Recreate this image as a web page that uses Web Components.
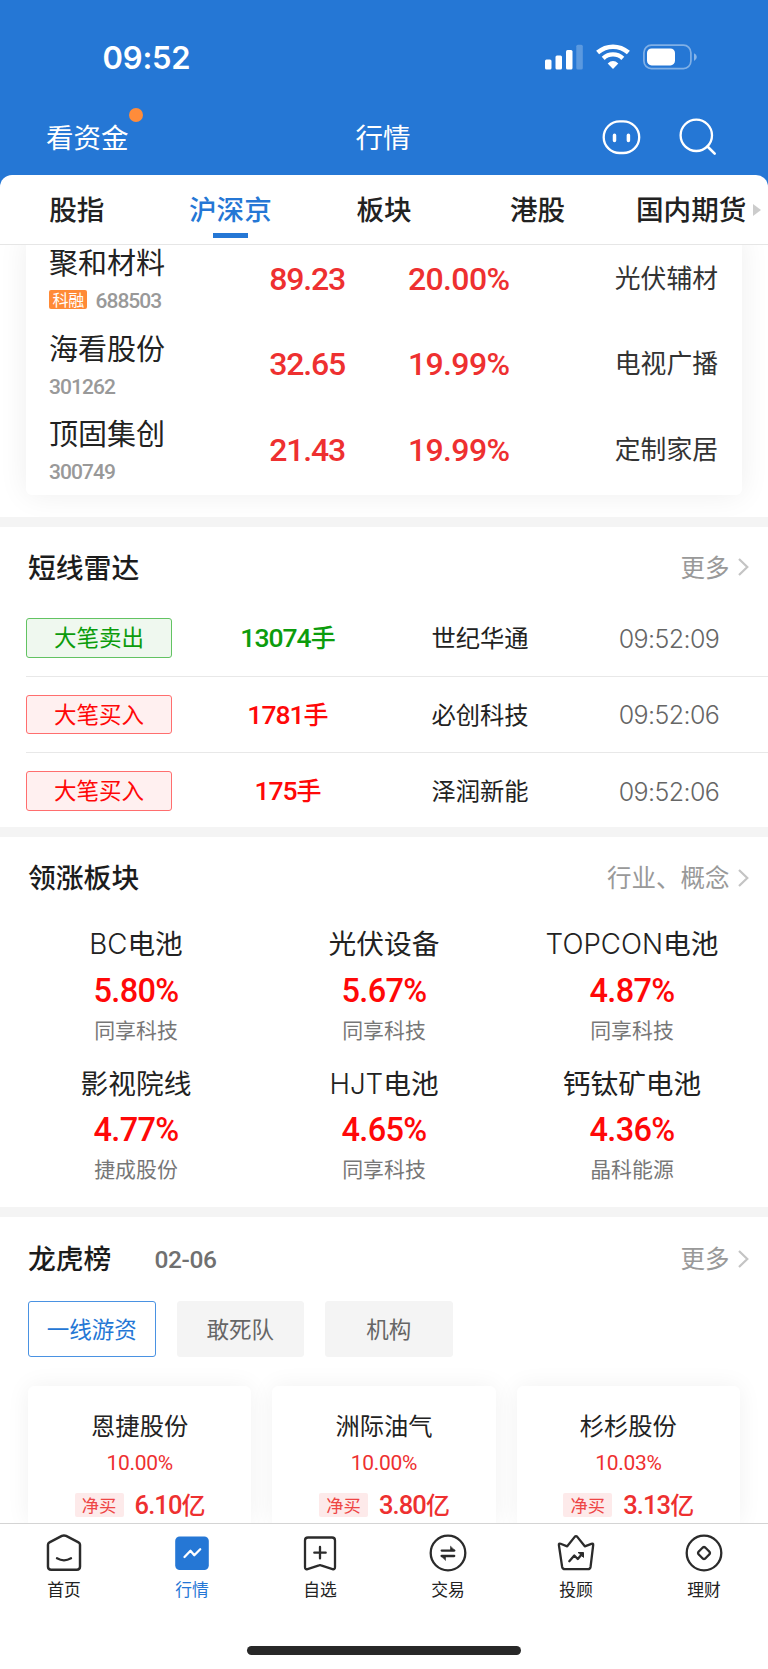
<!DOCTYPE html>
<html lang="zh-CN">
<head>
<meta charset="utf-8">
<title>行情</title>
<style>
  html, body { margin: 0; padding: 0; background: #fff; }
  body {
    --blue: #2577d5;
    --num: Roboto, "Noto Sans CJK SC", sans-serif;
    font-family: "Noto Sans CJK SC", sans-serif;
    color: #222;
  }
</style>
</head>
<body>
<market-page></market-page>

<script>
const ICONS = {
  home: '<path d="M4 12.2Q4 10.6 5.4 9.9L17 3.9Q19 2.9 21 3.9L32.600 9.900Q34 10.600 34 12.200V32.500Q34 35.500 31 35.500H7Q4 35.500 4 32.500Z" transform="translate(-1.3 -2.2) scale(1.068)"/><path d="M12 24.300Q19 28.300 26 24.300"/>',
  market: '<rect x="2.200" y="2.500" width="33.600" height="33.600" rx="4.500" fill="#2577d5" stroke="none"/><path d="M11.500 23L17.500 16.800L21.300 21.200L27.200 15.300" stroke="#fff"/>',
  fav: '<path d="M7 3.500H31Q34 3.500 34 6.500V33Q34 35.800 31.500 35.100L20 31.400Q19 31 18 31.400L6.500 35.100Q4 35.800 4 33V6.500Q4 3.500 7 3.500Z"/><path d="M19 13V24.400M13.300 18.700H24.700"/>',
  trade: '<circle cx="19" cy="19" r="17.300"/><path d="M12.700 16.600H25.200M25.200 22H12.700"/><path d="M25.800 16.600H21.500V12.500Z M12.200 22H16.500V26.100Z" fill="#2b2b2b" stroke-width=".6"/>',
  advisor: '<path d="M1.900 11Q1.600 9 3.600 9.800L10.200 12.300L17.700 2.900Q19 1.500 20.300 2.900L27.800 12.300L34.400 9.800Q36.500 9 36.200 11L33.600 32.700Q33.200 35.200 30.800 35.200H8Q5.600 35.200 5.100 32.700Z"/><path d="M12.300 27.200L17.300 21.500L20.800 25L25 20"/><path d="M21.500 18.500H26.500V23Z" fill="#2b2b2b" stroke-width="1"/>',
  wealth: '<circle cx="19" cy="19" r="17.300"/><path d="M17 14.300Q19 11.700 21 14.300L23.700 17Q26.300 19 23.700 21L21 23.700Q19 26.300 17 23.700L14.300 21Q11.700 19 14.300 17Z"/>'
};

// shared base: attaches the shadow root and fills it once connected
class BaseElement extends HTMLElement {
  constructor() {
    super();
    this.attachShadow({ mode: 'open' });
  }
  connectedCallback() {
    this.shadowRoot.innerHTML = this.template();
  }
  attr(name) {
    return this.getAttribute(name) || '';
  }
}

class StatusBar extends BaseElement {
  template() {
    return `
      <style>
        :host { display: flex; justify-content: space-between; align-items: center; height: 115px;
          padding: 0 71px 0 102.500px; color: #fff; box-sizing: border-box; }
        .time { font: 600 31px/40px Inter, sans-serif; letter-spacing: -0.200px; }
        .icons { display: flex; align-items: center; gap: 13px; margin-top: -2px; }
        svg { display: block; }
      </style>
      <span class="time">09:52</span>
      <div class="icons">
        <svg width="38" height="26" fill="#fff">
          <rect x="0" y="15.500" width="6.500" height="10" rx="1.500"/>
          <rect x="10.500" y="11.500" width="6.500" height="14" rx="1.500"/>
          <rect x="21" y="6" width="6.500" height="19.500" rx="1.500"/>
          <rect x="31.300" y="0.700" width="6.500" height="24.800" rx="1.500" opacity=".25"/>
        </svg>
        <svg width="34" height="26" viewBox="0 0 34 26" fill="none" stroke="#fff">
          <path d="M1.600 8.600Q8.500 2.700 17 2.700T32.400 8.600" stroke-width="4.600"/>
          <path d="M7.200 14.300Q11.500 10.400 17 10.400T26.800 14.300" stroke-width="4.400"/>
          <path d="M17 25L11.700 19.400Q17 14.500 22.300 19.400Z" fill="#fff" stroke="none"/>
        </svg>
        <svg width="54" height="26" viewBox="0 0 54 26">
          <rect x="0.900" y="1.200" width="47" height="23.400" rx="7.500" fill="none" stroke="#fff" stroke-opacity=".42" stroke-width="1.700"/>
          <rect x="4" y="4.400" width="28" height="17" rx="4.600" fill="#fff"/>
          <path d="M51 9.200Q53.800 10.500 53.800 13T51 16.900Z" fill="#fff" opacity=".45"/>
        </svg>
      </div>`;
  }
}

class TitleBar extends BaseElement {
  template() {
    return `
      <style>
        :host { display: grid; grid-template-columns: 1fr auto 1fr; align-items: center; height: 60px;
          margin-top: -9px; padding: 0 51px 0 46px; color: #fff; font-size: 27.500px; line-height: 40px; }
        .left { position: relative; justify-self: start; }
        .dot { position: absolute; left: 83px; top: -8px; width: 14px; height: 14px; border-radius: 50%; background: #ff8c3a; }
        .mid { padding-left: 3px; }
        .tools { display: flex; justify-content: flex-end; gap: 38px; margin-top: 1px; }
        svg { display: block; fill: none; stroke: #fff; stroke-width: 2.300; stroke-linecap: round; }
      </style>
      <span class="left">看资金<i class="dot"></i></span>
      <span class="mid">行情</span>
      <div class="tools">
        <svg width="39" height="38" viewBox="0 0 39 38">
          <rect x="1.700" y="3.400" width="35.500" height="31.600" rx="16"/>
          <path d="M12.500 17.300V22.500M26.400 17.300V22.500" stroke-width="3.500"/>
        </svg>
        <svg width="38" height="38" viewBox="0 0 38 38">
          <circle cx="17.300" cy="17.300" r="15.700"/><path d="M28.500 28.500L35.700 35.700" stroke-width="2.600"/>
        </svg>
      </div>`;
  }
}

class MarketTabs extends BaseElement {
  template() {
    const tabs = ['股指', '沪深京', '板块', '港股', '国内期货'];
    return `
      <style>
        :host { display: grid; grid-template-columns: repeat(5, 1fr); height: 69px; background: #fff;
          border-bottom: 1px solid #e6e6e6; border-radius: 12px 12px 0 0; position: relative; }
        span { display: flex; flex-direction: column; align-items: center; font-size: 27.600px; font-weight: 500; line-height: 40px;
          padding-top: 13px; white-space: nowrap; }
        .on { color: var(--blue); }
        .on::after { content: ''; width: 35px; height: 5px; margin-top: 5px; background: var(--blue); }
        .more { position: absolute; right: 7px; top: 29px; border: 6px solid transparent; border-left: 8px solid #ccc; border-right: 0; }
      </style>
      ${tabs.map((t, i) => `<span class="${i === 1 ? 'on' : ''}">${t}</span>`).join('')}
      <i class="more"></i>`;
  }
}

class StockRow extends BaseElement {
  template() {
    const tag = this.attr('tag');
    return `
      <style>
        :host { display: grid; grid-template-columns: 200px 119px 164.500px 208.500px; height: 85.600px; align-items: center; }
        .who { align-self: start; padding: 6.700px 0 0 23px; }
        .name { font-size: 29px; line-height: 38px; }
        .code { display: flex; align-items: center; gap: 8px; height: 41.600px; font: 500 21px/30px var(--num); letter-spacing: -0.950px; color: #999; }
        .tag { font: 16px/19px "Noto Sans CJK SC", sans-serif; letter-spacing: -0.300px; color: #fff; background: #ff8a36; border-radius: 2px; padding: 0 3.500px; margin-top: -2px; }
        .num { font: 500 32px/40px var(--num); letter-spacing: -1.200px; color: #ee3030; text-align: right; }
        .pct { letter-spacing: -0.600px; }
        .sector { font-size: 25.800px; line-height: 36px; text-align: right; color: #333; margin-top: -4px; }
      </style>
      <div class="who">
        <div class="name">${this.attr('name')}</div>
        <div class="code">${tag ? `<span class="tag">${tag}</span>` : ''}<span>${this.attr('code')}</span></div>
      </div>
      <div class="num">${this.attr('price')}</div>
      <div class="num pct">${this.attr('change')}</div>
      <div class="sector">${this.attr('sector')}</div>`;
  }
}

class SectionHead extends BaseElement {
  template() {
    return `
      <style>
        :host { display: flex; align-items: center; height: 40px; padding: 0 19px 0 28px; }
        b { font-size: 27.800px; font-weight: 500; line-height: 40px; color: #1c1c1c; margin-top: -2px; }
        .date { font: 500 24.500px/40px var(--num); color: #707070; margin: 3px 0 0 43px; letter-spacing: -0.400px; }
        .more { margin-left: auto; font-size: 24.500px; line-height: 40px; color: #999; display: flex; align-items: center; gap: 8.500px; }
        svg { fill: none; stroke: #c4c4c4; stroke-width: 2.200; margin-top: 1px; }
      </style>
      <b><slot></slot></b>
      ${this.attr('date') ? `<span class="date">${this.attr('date')}</span>` : ''}
      <span class="more">${this.attr('more')}<svg width="11" height="18"><path d="M1 1L9.300 9L1 17"/></svg></span>`;
  }
}

class RadarRow extends BaseElement {
  template() {
    const color = this.attr('side') === 'sell' ? '#0c9c0c' : '#ff0808';
    const border = this.attr('side') === 'sell' ? '#62c362' : '#ff6e6e';
    const bg = this.attr('side') === 'sell' ? '#eff8ef' : '#fff0f0';
    return `
      <style>
        :host { display: grid; grid-template-columns: 146px 231px 154px 1fr; align-items: center; text-align: center;
          height: 75.600px; margin-left: 26px; border-bottom: 1px solid #e8e8e8; }
        :host(:last-child) { border-color: transparent; }
        .tag { height: 37.500px; border: 1px solid ${border}; border-radius: 3px; background: ${bg}; color: ${color};
          font-size: 22.500px; line-height: 35px; }
        .vol { font: 500 26.500px/36px var(--num); color: ${color}; letter-spacing: -1px; margin-top: 2px; }
        .vol span { font-size: 25px; }
        .name { font-size: 24.300px; line-height: 36px; margin-top: -1px; }
        .time { font: 350 25px/36px Inter, sans-serif; color: #666; letter-spacing: -0.600px; width: 224px; margin-top: 2px; }
      </style>
      <div class="tag">${this.attr('kind')}</div>
      <div class="vol">${this.attr('vol')}<span>手</span></div>
      <div class="name">${this.attr('name')}</div>
      <div class="time">${this.attr('time')}</div>`;
  }
}

class SectorCell extends BaseElement {
  template() {
    return `
      <style>
        :host { display: block; height: 139.500px; text-align: center; }
        .name { font: 27.700px/44px Inter, "Noto Sans CJK SC", sans-serif; font-weight: 350; letter-spacing: 0; }
        .name span { font-weight: 400; letter-spacing: 0; }
        .pct { font: 500 32.500px/44px var(--num); color: #ff0808; letter-spacing: -0.700px; margin-top: 2.500px; }
        .lead { font-size: 20.900px; line-height: 32px; color: #777; }
      </style>
      <div class="name">${this.attr('latin')}<span>${this.attr('name')}</span></div>
      <div class="pct">${this.attr('pct')}</div>
      <div class="lead">${this.attr('lead')}</div>`;
  }
}

class FilterChip extends BaseElement {
  template() {
    return `
      <style>
        :host { display: block; box-sizing: border-box; width: 127.500px; height: 56px; border-radius: 3px; background: #f4f4f4;
          color: #666; font-size: 22.500px; line-height: 53px; text-align: center; border: 1px solid #f4f4f4; }
        :host([active]) { background: #fff; border-color: #4a92e2; color: var(--blue); }
      </style>
      <slot></slot>`;
  }
}

class LeaderCard extends BaseElement {
  template() {
    return `
      <style>
        :host { display: block; height: 137px; border-radius: 6px 6px 0 0; background: #fff; text-align: center;
          box-shadow: 0 0 24px rgba(0, 0, 0, .06); box-sizing: border-box; padding-top: 21px; }
        .name { font-size: 24.300px; line-height: 36px; }
        .pct { font: 21px/30px var(--num); color: #ee3030; letter-spacing: -0.300px; margin-top: 5px; }
        .net { display: flex; justify-content: center; align-items: center; gap: 11px; margin-top: 9px; height: 36px; }
        .tag { font-size: 17.300px; line-height: 23px; height: 24px; padding: 0 7.200px; background: #fdeaea; color: #ee4545; border-radius: 2px; }
        .sum { font: 500 25.500px/36px var(--num); color: #ee3030; letter-spacing: -0.900px; margin-top: 1px; }
        .sum span { font-size: 24px; }
      </style>
      <div class="name">${this.attr('name')}</div>
      <div class="pct">${this.attr('pct')}</div>
      <div class="net"><span class="tag">净买</span><div class="sum">${this.attr('sum')}<span>亿</span></div></div>`;
  }
}

class TabItem extends BaseElement {
  template() {
    return `
      <style>
        :host { display: flex; flex-direction: column; align-items: center; flex: 1; color: #222; }
        :host([active]) { color: var(--blue); }
        svg { fill: none; stroke: #2b2b2b; stroke-width: 2.300; stroke-linecap: round; stroke-linejoin: round; margin-top: 9.500px; }
        span { font-size: 16.800px; line-height: 24px; margin-top: 5.500px; }
      </style>
      <svg width="38" height="38" viewBox="0 0 38 38">${ICONS[this.attr('icon')]}</svg>
      <span><slot></slot></span>`;
  }
}

class MarketPage extends BaseElement {
  template() {
    return `
      <style>
        :host { display: flex; flex-direction: column; height: 1669px; overflow: hidden; background: #fff; }
        header { background: var(--blue); flex: none; position: relative; z-index: 2; }
        title-bar { margin-bottom: 9px; }
        main { height: 1278px; flex: none; }
        section { border-top: 10px solid #f4f4f4; box-sizing: border-box; background: #fff; position: relative; }
        .stocks { height: 271.500px; border: 0; display: flow-root; }
        .card { margin: -9.500px 26px 0; height: 259.500px; border-radius: 6px; box-shadow: 0 0 30px rgba(0, 0, 0, .07); }
        .radar { height: 310.500px; padding-top: 20px; }
        .radar .rows { margin-top: 13.500px; }
        .sectors { height: 380px; padding-top: 20px; }
        .grid { display: grid; grid-template-columns: repeat(3, 1fr); margin: 25px 12px 0; }
        .leaders { padding-top: 21px; height: 316px; }
        .chips { display: flex; gap: 21px; margin: 23px 28px 0; }
        .cards { display: grid; grid-template-columns: repeat(3, 1fr); gap: 21px; margin: 28.500px 28px 0; }
        footer { flex: 1; border-top: 1.500px solid #d4d4d4; display: flex; flex-direction: column; background: #fff; align-items: center;
          position: relative; z-index: 2; }
        nav { display: flex; width: 100%; height: 121.500px; }
        .grip { width: 274px; height: 9px; border-radius: 5px; background: #282828; }
      </style>
      <header>
        <status-bar></status-bar>
        <title-bar></title-bar>
        <market-tabs></market-tabs>
      </header>
      <main>
        <section class="stocks">
          <div class="card">
            <stock-row name="聚和材料" tag="科融" code="688503" price="89.23" change="20.00%" sector="光伏辅材"></stock-row>
            <stock-row name="海看股份" code="301262" price="32.65" change="19.99%" sector="电视广播"></stock-row>
            <stock-row name="顶固集创" code="300749" price="21.43" change="19.99%" sector="定制家居"></stock-row>
          </div>
        </section>
        <section class="radar">
          <section-head more="更多">短线雷达</section-head>
          <div class="rows">
            <radar-row side="sell" kind="大笔卖出" vol="13074" name="世纪华通" time="09:52:09"></radar-row>
            <radar-row side="buy" kind="大笔买入" vol="1781" name="必创科技" time="09:52:06"></radar-row>
            <radar-row side="buy" kind="大笔买入" vol="175" name="泽润新能" time="09:52:06"></radar-row>
          </div>
        </section>
        <section class="sectors">
          <section-head more="行业、概念">领涨板块</section-head>
          <div class="grid">
            <sector-cell latin="BC" name="电池" pct="5.80%" lead="同享科技"></sector-cell>
            <sector-cell name="光伏设备" pct="5.67%" lead="同享科技"></sector-cell>
            <sector-cell latin="TOPCON" name="电池" pct="4.87%" lead="同享科技"></sector-cell>
            <sector-cell name="影视院线" pct="4.77%" lead="捷成股份"></sector-cell>
            <sector-cell latin="HJT" name="电池" pct="4.65%" lead="同享科技"></sector-cell>
            <sector-cell name="钙钛矿电池" pct="4.36%" lead="晶科能源"></sector-cell>
          </div>
        </section>
        <section class="leaders">
          <section-head more="更多" date="02-06">龙虎榜</section-head>
          <div class="chips">
            <filter-chip active>一线游资</filter-chip>
            <filter-chip>敢死队</filter-chip>
            <filter-chip>机构</filter-chip>
          </div>
          <div class="cards">
            <leader-card name="恩捷股份" pct="10.00%" sum="6.10"></leader-card>
            <leader-card name="洲际油气" pct="10.00%" sum="3.80"></leader-card>
            <leader-card name="杉杉股份" pct="10.03%" sum="3.13"></leader-card>
          </div>
        </section>
      </main>
      <footer>
        <nav>
          <tab-item icon="home">首页</tab-item>
          <tab-item icon="market" active>行情</tab-item>
          <tab-item icon="fav">自选</tab-item>
          <tab-item icon="trade">交易</tab-item>
          <tab-item icon="advisor">投顾</tab-item>
          <tab-item icon="wealth">理财</tab-item>
        </nav>
        <div class="grip"></div>
      </footer>`;
  }
}

customElements.define('status-bar', StatusBar);
customElements.define('title-bar', TitleBar);
customElements.define('market-tabs', MarketTabs);
customElements.define('stock-row', StockRow);
customElements.define('section-head', SectionHead);
customElements.define('radar-row', RadarRow);
customElements.define('sector-cell', SectorCell);
customElements.define('filter-chip', FilterChip);
customElements.define('leader-card', LeaderCard);
customElements.define('tab-item', TabItem);
customElements.define('market-page', MarketPage);
</script>
</body>
</html>
